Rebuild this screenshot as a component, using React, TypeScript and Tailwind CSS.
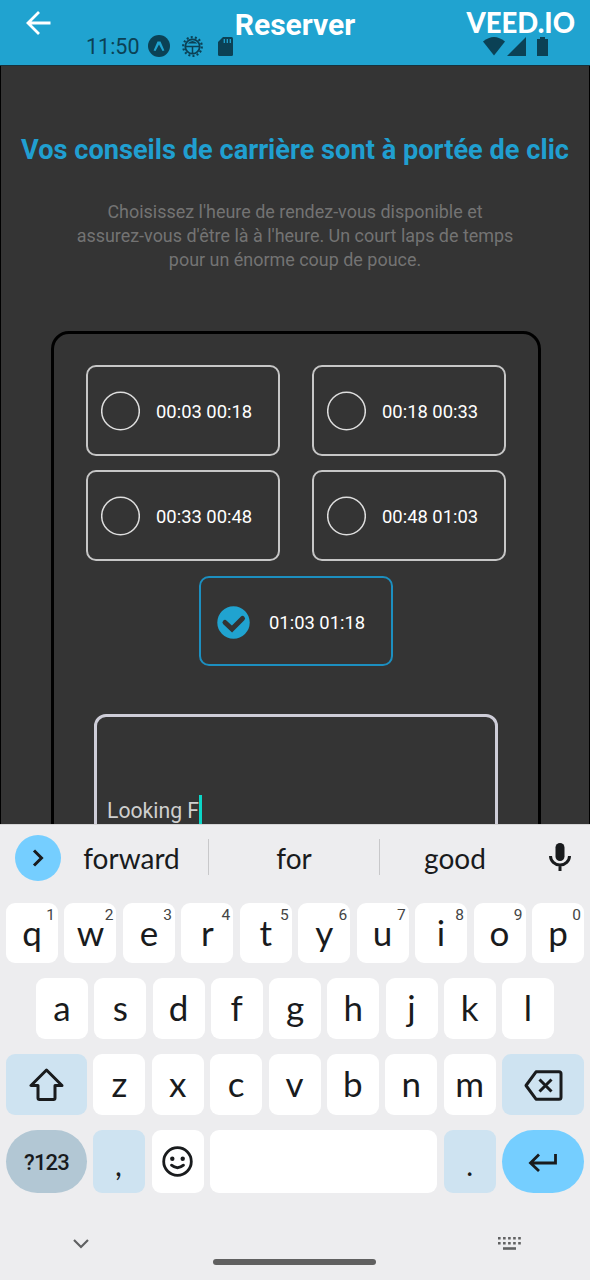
import type { ReactNode } from "react";

const slots = ["00:03 00:18", "00:18 00:33", "00:33 00:48", "00:48 01:03"];

function StatusBar() {
  return (
    <div className="absolute inset-x-0 top-[34px] flex h-6 items-center pl-[86px] pr-[41px] text-[#0b4155]">
      <span className="w-[61px] pt-[1px] text-[21.500px] leading-6">11:50</span>
      <svg className="ml-[1px] shrink-0" width="22" height="22" viewBox="0 0 22 22">
        <circle cx="11" cy="11" r="11" fill="currentColor" />
        <path d="M5.600 15.600 9.500 6.500h3l3.900 9.100-1.900.5L11 9.500 7.500 16.100z" fill="#20a3d0" />
      </svg>
      <svg className="ml-[12px] shrink-0" width="21" height="21" viewBox="0 0 21 21" fill="none" stroke="currentColor">
        <circle cx="10.500" cy="10.500" r="9.300" strokeWidth="2.200" strokeDasharray="2 2.174" />
        <circle cx="10.500" cy="10.500" r="7.200" strokeWidth="1.800" />
        <path d="M5.500 7.500Q10.500 2.500 15.500 7.500z" fill="currentColor" stroke="none" />
        <path d="M4 10.500h13M10.500 10.500v7" strokeWidth="1.500" />
      </svg>
      <svg className="ml-[15px] shrink-0" width="15" height="19" viewBox="0 0 15 19">
        <path d="M5 0h8.500Q15 0 15 1.500v16Q15 19 13.500 19h-12Q0 19 0 17.500V5z" fill="currentColor" />
        <path d="M6.300 2v4M9.300 2v4M12.300 2v4" stroke="#20a3d0" strokeWidth="1.300" />
      </svg>
      <div className="ml-auto flex items-center">
        <svg width="22" height="19" viewBox="0 0 22 19">
          <path d="M0 4.500Q11-4.500 22 4.500L11 18.500z" fill="currentColor" />
        </svg>
        <svg className="ml-[2px]" width="19" height="19" viewBox="0 0 19 19">
          <path d="M19 0v19H0z" fill="currentColor" />
        </svg>
        <svg className="ml-[11px] mr-[1px]" width="11" height="19" viewBox="0 0 11 19">
          <path d="M3 0h5v2h3v17H0V2h3z" fill="currentColor" />
        </svg>
      </div>
    </div>
  );
}

function Header() {
  return (
    <header className="relative h-[66px] shrink-0 border-b border-[#17323d] bg-[#20a3d0] text-white">
      <div className="grid h-[46px] grid-cols-3 items-center px-[15px]">
        <svg className="ml-[11px]" width="25" height="24" viewBox="0 0 25 24" fill="none" stroke="currentColor" strokeWidth="2.800">
          <path d="M24.500 12H2.200M13 1 2 12l11 11" />
        </svg>
        <h1 className="justify-self-center whitespace-nowrap pt-[3px] text-[30px] font-bold leading-8">Reserver</h1>
        <span className="justify-self-end whitespace-nowrap font-['Lato'] text-[27.500px] font-black leading-8">VEED.IO</span>
      </div>
      <StatusBar />
    </header>
  );
}

function Slot({ label, selected = false }: { label: string; selected?: boolean }) {
  return (
    <div
      className={
        selected
          ? "flex h-[90px] w-[194px] items-center rounded-[10px] border-2 border-[#1c8fc0] pl-[16px]"
          : "flex h-[91px] w-[194px] items-center rounded-[10px] border-2 border-[#c6c6c6] pl-[13px]"
      }
    >
      {selected ? (
        <svg className="mr-[19px] mt-[2px] shrink-0" width="33" height="33" viewBox="0 0 33 33">
          <circle cx="16.500" cy="16.500" r="16.200" fill="#20a3d0" />
          <path d="m8 16.500 7 6.500 10.500-10.500" fill="none" stroke="#333" strokeWidth="5" strokeLinejoin="miter" strokeLinecap="round" />
        </svg>
      ) : (
        <svg className="mr-[16px] shrink-0" width="39" height="40" viewBox="0 0 39 40">
          <circle cx="19.500" cy="20" r="18.800" fill="none" stroke="#dedede" strokeWidth="1.500" />
        </svg>
      )}
      <span className={selected ? "whitespace-nowrap pt-[4px] text-[18.400px] leading-6 text-white" : "whitespace-nowrap pt-[2px] text-[18.400px] leading-6 text-white"}>
        {label}
      </span>
    </div>
  );
}

function Booking() {
  return (
    <main className="h-[758px] shrink-0 overflow-hidden border-x border-black bg-[#343434] px-[50px]">
      <h2 className="-mx-[50px] whitespace-nowrap pt-[68px] text-center text-[27.200px] font-bold leading-8 text-[#209fd0]">
        Vos conseils de carrière sont à portée de clic
      </h2>
      <p className="pt-[34px] text-center text-[17.950px] leading-6 text-[#737373]">
        Choisissez l'heure de rendez-vous disponible et
        <br />
        assurez-vous d'être là à l'heure. Un court laps de temps
        <br />
        pour un énorme coup de pouce.
      </p>
      <section className="mt-[59px] h-[700px] w-[490px] rounded-[18px] border-[3px] border-black px-[32px] pt-[31px]">
        <div className="grid grid-cols-2 gap-x-[32px] gap-y-[14px]">
          {slots.map((s) => (
            <Slot key={s} label={s} />
          ))}
        </div>
        <div className="mt-[15px] flex justify-center">
          <Slot label="01:03 01:18" selected />
        </div>
        <div className="mx-auto mt-[48px] flex h-[200px] w-[404px] items-start rounded-[12px] border-[3px] border-[#cecdd8] pl-[10px] pt-[78px]">
          <span className="w-[92px] whitespace-nowrap pt-[2px] text-[21.200px] leading-[28px] text-[#cfcfcf]">Looking F</span>
          <span className="h-[34px] w-[3px] bg-[#0bd6c8]" />
        </div>
      </section>
    </main>
  );
}

function Key({ children, hint, className = "w-[52px] bg-white" }: { children?: ReactNode; hint?: string; className?: string }) {
  return (
    <div className={`relative flex h-full shrink-0 items-center justify-center rounded-[9px] text-[35px] leading-[40px] ${className}`}>
      {hint && <span className="absolute right-[3px] top-[3px] font-['Roboto'] text-[15.500px] leading-[18px] text-[#444]">{hint}</span>}
      {children}
    </div>
  );
}

function Letter({ char, hint }: { char: string; hint?: string }) {
  return (
    <Key hint={hint}>
      <span className="-mt-[3px]">{char}</span>
    </Key>
  );
}

function Keyboard() {
  return (
    <footer className="flex h-[456px] shrink-0 flex-col border-t border-[#d5d5d6] bg-[#ededef] font-['Lato'] text-[#191b1d]">
      <div className="flex h-[64px] items-center pl-[15px] pr-[19px] text-[28px] leading-8">
        <span className="mt-[1px] flex size-[46px] items-center justify-center rounded-full bg-[#75ceff]">
          <svg width="12" height="18" viewBox="0 0 12 18" fill="none" stroke="currentColor" strokeWidth="3">
            <path d="m2 1.500 7.500 7.500L2 16.500" />
          </svg>
        </span>
        <span className="w-[147px] pt-[2px] pr-[6px] text-center">forward</span>
        <span className="h-[36px] w-px bg-[#c8c8ca]" />
        <span className="w-[170px] pt-[2px] text-center">for</span>
        <span className="h-[36px] w-px bg-[#c8c8ca]" />
        <span className="w-[150px] pt-[2px] text-center">good</span>
        <svg className="ml-auto" width="22" height="30" viewBox="0 0 22 30">
          <rect x="6.500" y="1" width="9" height="18" rx="4.500" fill="currentColor" />
          <path d="M1.500 14a9.500 9 0 0 0 19 0M11 23v6" fill="none" stroke="currentColor" strokeWidth="3" />
        </svg>
      </div>
      <div className="mt-[14px] flex h-[60px] justify-between px-[6px]">
        {"qwertyuiop".split("").map((c, i) => (
          <Letter key={c} char={c} hint={String((i + 1) % 10)} />
        ))}
      </div>
      <div className="mt-[15px] flex h-[61px] justify-between px-[36px]">
        {"asdfghjkl".split("").map((c) => (
          <Letter key={c} char={c} />
        ))}
      </div>
      <div className="mt-[15px] flex h-[61px] justify-between px-[6px]">
        <Key className="w-[81px] bg-[#cee3f1]">
          <svg width="35" height="34" viewBox="0 0 35 34" fill="none" stroke="currentColor" strokeWidth="3" strokeLinejoin="round">
            <path d="M17.500 2 2 17.500h7V30q0 1.500 1.500 1.500h14q1.500 0 1.500-1.500V17.500h7z" />
          </svg>
        </Key>
        {"zxcvbnm".split("").map((c) => (
          <Letter key={c} char={c} />
        ))}
        <Key className="w-[82px] bg-[#cee3f1]">
          <svg className="mt-[2px]" width="39" height="31" viewBox="0 0 39 31" fill="none" stroke="currentColor" strokeWidth="3" strokeLinejoin="round">
            <path d="M12 1.800h23q2 0 2 2v23.400q0 2-2 2H12L2 15.500z" />
            <path d="m15.500 9.500 12 12M27.500 9.500l-12 12" />
          </svg>
        </Key>
      </div>
      <div className="mt-[15px] flex h-[63px] justify-between px-[6px]">
        <Key className="w-[81px] rounded-[32px] bg-[#b2c7d4]">
          <span className="pt-[2px] font-['Roboto'] text-[22px] font-medium leading-7 tracking-[-0.800px]">?123</span>
        </Key>
        <Key className="w-[52px] bg-[#cee3f1]">
          <span className="pt-[5px] text-[30px] italic">,</span>
        </Key>
        <Key>
          <svg width="31" height="31" viewBox="0 0 31 31" fill="none" stroke="currentColor" strokeWidth="2.800">
            <circle cx="15.500" cy="15.500" r="13.800" />
            <path d="M9.500 19.200q6 5 12 0" strokeLinecap="round" />
            <circle cx="10.300" cy="12.700" r="2.200" fill="currentColor" stroke="none" />
            <circle cx="20.700" cy="12.700" r="2.200" fill="currentColor" stroke="none" />
          </svg>
        </Key>
        <Key className="w-[227px] bg-white" />
        <Key className="w-[52px] bg-[#cee3f1]">
          <span className="pt-[7px] text-[29px]">.</span>
        </Key>
        <Key className="w-[82px] rounded-[32px] bg-[#75ceff]">
          <svg className="mt-[2px]" width="30" height="19" viewBox="0 0 30 19" fill="none" stroke="currentColor" strokeWidth="2.800">
            <path d="M27.500 1v9H3M11 1.500 2.500 10l8.500 8" />
          </svg>
        </Key>
      </div>
      <div className="relative mt-[38px] flex h-[40px] items-start justify-between pl-[73px] pr-[67px] text-[#606162]">
        <svg className="mt-[8px]" width="16" height="10" viewBox="0 0 16 10" fill="none" stroke="currentColor" strokeWidth="2.200">
          <path d="m1 1 7 7 7-7" />
        </svg>
        <svg className="mt-[6px]" width="25" height="13" viewBox="0 0 25 13" fill="none" stroke="currentColor" strokeWidth="2.600">
          <path d="M0 1.300h23M0 6.300h23" strokeDasharray="2.600 2.450" />
          <path d="M5 11.500h13" />
        </svg>
        <span className="absolute left-[213px] top-[28px] h-[6px] w-[163px] rounded-full bg-[#606060]" />
      </div>
    </footer>
  );
}

export default function App() {
  return (
    <div className="flex h-[1280px] w-[590px] flex-col overflow-hidden bg-[#343434] font-['Roboto',sans-serif]">
      <Header />
      <Booking />
      <Keyboard />
    </div>
  );
}
